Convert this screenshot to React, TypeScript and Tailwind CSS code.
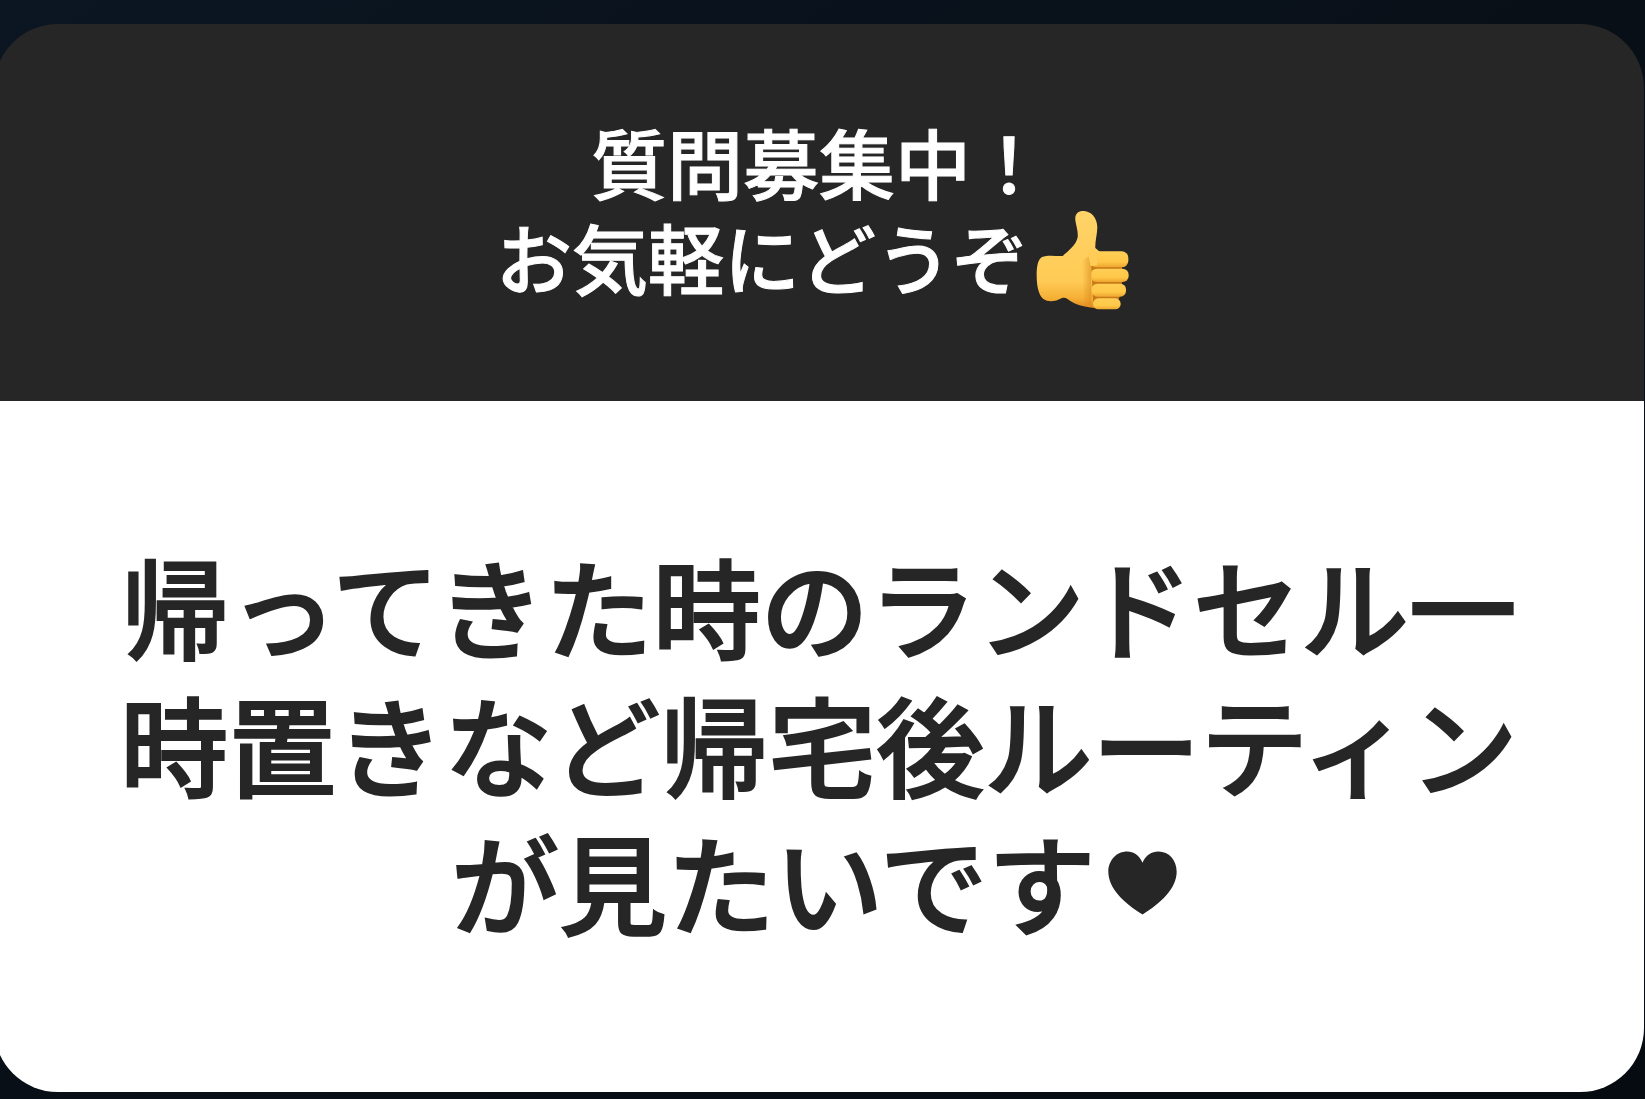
function ThumbsUp() {
  return (
    <svg
      role="img"
      aria-label="thumbs up"
      viewBox="108 60 282 300"
      className="mt-1.5 ml-2 mr-3 w-[94px] h-[100px] shrink-0"
    >
      <defs>
        <linearGradient id="hand" x1="0" y1="0" x2="0" y2="1">
          <stop offset="0" stopColor="#ffd368" />
          <stop offset="0.72" stopColor="#ffcb55" />
          <stop offset="0.9" stopColor="#f5ae35" />
          <stop offset="1" stopColor="#dc8420" />
        </linearGradient>
        <linearGradient id="finger" x1="0" y1="0" x2="0" y2="1">
          <stop offset="0" stopColor="#ffce55" />
          <stop offset="0.65" stopColor="#ffc848" />
          <stop offset="1" stopColor="#eda52e" />
        </linearGradient>
        <linearGradient id="crease" x1="0" y1="0" x2="1" y2="0">
          <stop offset="0" stopColor="#d98a1c" stopOpacity="0" />
          <stop offset="1" stopColor="#d98a1c" stopOpacity="0.6" />
        </linearGradient>
      </defs>
      <path
        d="M226 90C224 70 236 62 252 63C274 64 292 84 292 112C291 137 285 154 286 174L300 186L300 356C270 352 238 350 216 336C203 328 197 320 186 324C168 334 146 338 131 328C115 316 110 286 110 256C110 230 113 209 126 201C144 194 169 199 188 198C204 184 228 166 233 142C235 124 228 108 226 90Z"
        fill="url(#hand)"
      />
      <path d="M272 200H366V300L350 346H280Z" fill="#c97a18" />
      <rect x="270" y="184" width="115" height="48" rx="20" fill="url(#finger)" />
      <rect x="272" y="236" width="114" height="40" rx="18" fill="url(#finger)" />
      <rect x="275" y="281" width="103" height="39" rx="17" fill="url(#finger)" />
      <rect x="279" y="325" width="83" height="33" rx="16" fill="url(#finger)" />
      <path d="M246 210L274 196V346L252 342Z" fill="url(#crease)" />
      <path d="M262 184H292V226L272 228Z" fill="#ffcd57" />
    </svg>
  );
}

function Heart() {
  return (
    <svg
      role="img"
      aria-label="heart"
      viewBox="142 98 208 192"
      className="mt-1.5 ml-3 mr-2.5 w-[69px] h-16 shrink-0"
    >
      <path
        d="M246 133C256 110 274 99 294 99C326 99 349 125 349 160C349 210 302 254 246 289C190 254 143 210 143 160C143 125 168 99 200 99C219 99 236 110 246 133Z"
        fill="#262626"
      />
    </svg>
  );
}

export default function App() {
  return (
    <main
      lang="ja"
      className="min-h-screen overflow-hidden bg-linear-to-br from-[#0b1622] via-[#080f17] to-[#050b10] pt-6 pb-[7px] font-['Noto_Sans_CJK_JP',sans-serif] font-medium"
    >
      <section className="-ml-1.5 mr-px overflow-hidden rounded-[64px] text-center whitespace-nowrap">
        <header className="bg-[#262626] pt-[90px] pb-[97px] text-[76px] leading-[95px] text-white [-webkit-text-stroke:1px_#fff]">
          <p className="flex h-[95px] items-center justify-center">質問募集中！</p>
          <p className="flex h-[95px] items-center justify-center">
            お気軽にどうぞ
            <ThumbsUp />
          </p>
        </header>
        <div className="bg-white pt-[134px] pb-[143px] text-[108px] leading-[138px] text-[#262626] [-webkit-text-stroke:2px_#262626]">
          <p>帰ってきた時のランドセル一</p>
          <p>時置きなど帰宅後ルーティン</p>
          <p className="flex h-[138px] items-center justify-center">
            が見たいです
            <Heart />
          </p>
        </div>
      </section>
    </main>
  );
}
